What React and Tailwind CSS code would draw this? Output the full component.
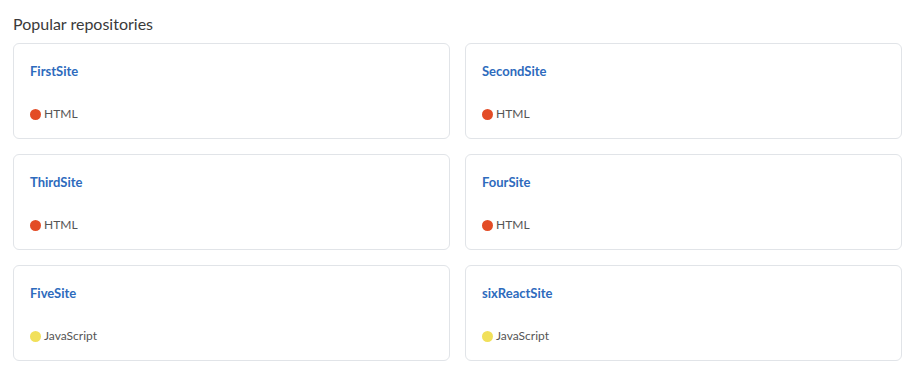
import React from 'react';

const repos = [
    { name: 'FirstSite', lang: 'HTML', color: 'bg-[#e34c26]' },
    { name: 'SecondSite', lang: 'HTML', color: 'bg-[#e34c26]' },
    { name: 'ThirdSite', lang: 'HTML', color: 'bg-[#e34c26]' },
    { name: 'FourSite', lang: 'HTML', color: 'bg-[#e34c26]' },
    { name: 'FiveSite', lang: 'JavaScript', color: 'bg-[#f1e05a]' },
    { name: 'sixReactSite', lang: 'JavaScript', color: 'bg-[#f1e05a]' },
];

const App = () => {
    return (
        <div className="min-h-screen bg-white px-[13px] pt-[14px] font-['Lato','Liberation_Sans',sans-serif]">
            <h2 className="text-[16px] leading-[20px] text-[#3a3a3a] mb-[9px]">Popular repositories</h2>

            <div className="grid grid-cols-2 gap-x-[15px] gap-y-[15px] w-[889px]">
                {repos.map((repo) => (
                    <div key={repo.name} className="border border-[#e1e4e8] rounded-md pl-[16px] pr-[17px] pt-[15px] pb-[15px]">
                        <div className="text-[13px] leading-[24px] font-bold text-[#2e6bbd]">{repo.name}</div>
                        <div className="flex items-center gap-[3px] mt-[22px] text-[12px] leading-[18px] text-[#555]">
                            <span className={`w-[11px] h-[11px] rounded-full ${repo.color}`}></span>
                            <span>{repo.lang}</span>
                        </div>
                    </div>
                ))}
            </div>
        </div>
    );
};

export default App;
